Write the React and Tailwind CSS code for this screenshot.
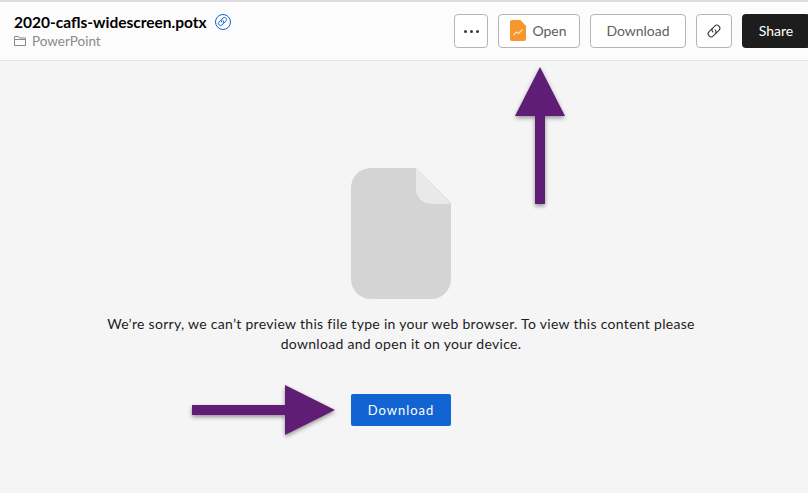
import React from "react";

const FileIcon = () => (
  <svg width="100" height="131" viewBox="0 0 100 131" className="block">
    <path d="M20 0H65L100 35V111A20 20 0 0 1 80 131H20A20 20 0 0 1 0 111V20A20 20 0 0 1 20 0Z" fill="#d4d4d4" />
    <path d="M65 0L100 36H80A15 15 0 0 1 65 21Z" fill="#e9e9e9" />
  </svg>
);

const PptIcon = () => (
  <svg width="16" height="21" viewBox="0 0 16 21" className="block">
    <path d="M2 0H10.500L16 6V19A2 2 0 0 1 14 21H2A2 2 0 0 1 0 19V2A2 2 0 0 1 2 0Z" fill="#f8952c" />
    <path d="M3.500 15L6.500 12L8.500 13.500L12.500 9.500" fill="none" stroke="#ffe3c2" strokeWidth="1.100" />
  </svg>
);

const LinkIcon = ({ size = 16, color = "#333333", width = 1 }) => (
  <svg width={size} height={size} viewBox="0 0 16 16" fill="none" stroke={color} strokeWidth={width} strokeLinecap="round" className="block">
    <g transform="rotate(-45 8 8)">
      <path d="M8.500 5H4A3 3 0 0 0 4 11H6.500A3 3 0 0 0 9.500 8" />
      <path d="M7.500 11H12A3 3 0 0 0 12 5H9.500A3 3 0 0 0 6.500 8" />
    </g>
  </svg>
);

const UpArrow = () => (
  <svg width="60" height="146" viewBox="0 0 60 146" className="absolute left-[510px] top-[64px] drop-shadow-[0_2px_2px_rgba(0,0,0,0.4)]">
    <path d="M30 3L55 52H35V140H25V52H5Z" fill="#5f1d76" />
  </svg>
);

const RightArrow = () => (
  <svg width="150" height="60" viewBox="0 0 150 60" className="absolute left-[190px] top-[380px] drop-shadow-[0_2px_2px_rgba(0,0,0,0.4)]">
    <path d="M2 25H95V5L145 30L95 55V35H2Z" fill="#5f1d76" />
  </svg>
);

export default function App() {
  return (
    <div className="relative h-[493px] w-[808px] overflow-hidden bg-[#f5f5f5] font-['Lato','Liberation_Sans',sans-serif] text-[#1d1c1d]">
      <header className="flex h-[61px] items-center border-t-2 border-b border-t-[#dedee0] border-b-[#e4e4e4] bg-[#fcfcfc] pl-[14px]">
        <div className="mt-[-1px]">
          <div className="flex items-center gap-[8px]">
            <span className="text-[15.500px] leading-[20px] font-bold text-black">2020-cafls-widescreen.potx</span>
            <span className="flex h-4 w-4 items-center justify-center rounded-full border border-[#1264d3]">
              <LinkIcon size={11} color="#1264d3" width={1.3} />
            </span>
          </div>
          <div className="flex items-center gap-[6px] text-[13.500px] leading-[18px] text-[#8a8a8a]">
            <svg width="12" height="10" viewBox="0 0 12 10" fill="none" stroke="#8a8a8a" className="block">
              <path d="M0.500 9.500V0.500H4.500L5.500 2H11.500V9.500Z" />
              <path d="M0.500 3.500H11.500" />
            </svg>
            <span>PowerPoint</span>
          </div>
        </div>
        <div className="ml-auto mr-[-2px] flex shrink-0 items-center gap-[10px] text-[14px] text-[#616061]">
          <button className="flex h-[34px] w-[34px] items-center justify-center gap-[3px] rounded border border-[#b5b5b5] bg-white">
            <span className="h-[3px] w-[3px] rounded-full bg-[#3a3a3a]" />
            <span className="h-[3px] w-[3px] rounded-full bg-[#3a3a3a]" />
            <span className="h-[3px] w-[3px] rounded-full bg-[#3a3a3a]" />
          </button>
          <button className="flex h-[34px] w-[82px] items-center justify-center gap-[6px] rounded border border-[#b5b5b5] bg-white pb-[1px] pr-[1px]">
            <PptIcon />
            <span>Open</span>
          </button>
          <button className="h-[34px] w-[96px] rounded border border-[#b5b5b5] bg-white pb-[1px]">Download</button>
          <button className="flex h-[34px] w-[36px] items-center justify-center rounded border border-[#b5b5b5] bg-white">
            <LinkIcon />
          </button>
          <button className="h-[34px] w-[68px] rounded bg-[#1d1d1d] pb-[1px] text-white">Share</button>
        </div>
      </header>

      <main className="flex flex-col items-center pt-[107px] pr-[6px]">
        <FileIcon />
        <p className="mt-[15px] w-[640px] text-center text-[14px] leading-[20px] tracking-[0.3px] text-[#1d1c1d]">
          We’re sorry, we can’t preview this file type in your web browser. To view this content please download and open it on your device.
        </p>
        <button className="mt-[40px] h-[32px] w-[100px] rounded-[2px] bg-[#1264d3] pt-[1px] text-[13px] tracking-[1px] text-white">Download</button>
      </main>

      <UpArrow />
      <RightArrow />
    </div>
  );
}
